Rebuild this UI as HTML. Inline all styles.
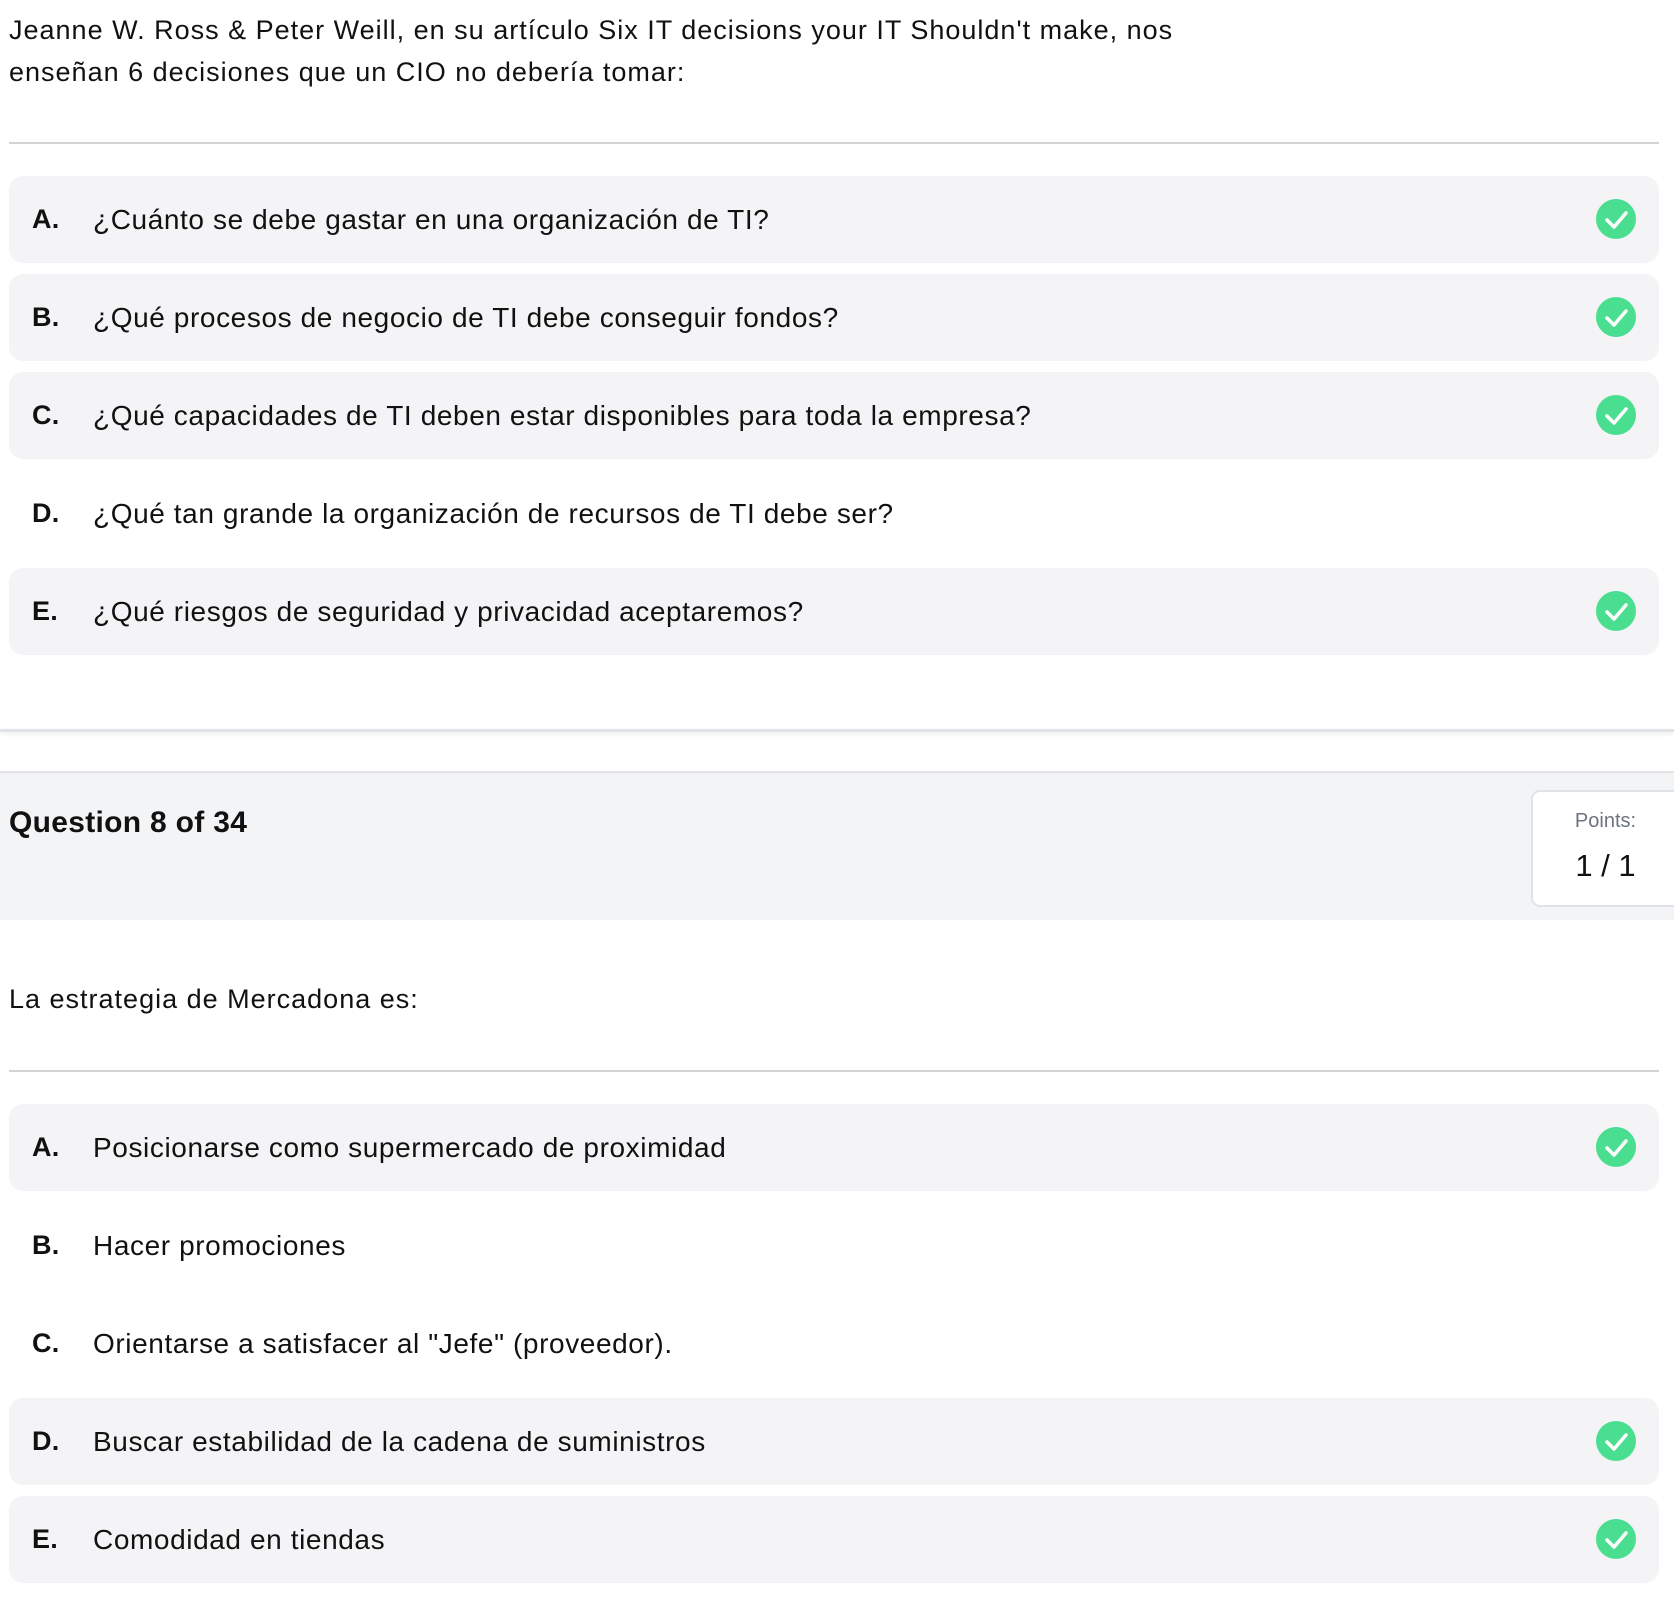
<!DOCTYPE html>
<html><head><meta charset="utf-8"><style>
body{margin:0;width:1674px;height:1600px;background:#fff;font-family:"Liberation Sans",sans-serif;color:#111;position:relative;overflow:hidden}
.p{position:absolute;left:9px;font-size:27px;line-height:42px;letter-spacing:1px}
.hr{position:absolute;left:9px;width:1650px;height:2px;background:#d4d4d8}
.opt{position:absolute;left:9px;width:1650px;height:87px;border-radius:14px}
.opt.bg{background:#f4f4f6}
.opt .l{position:absolute;left:23px;top:0;line-height:87px;font-size:27px;font-weight:bold;letter-spacing:0.3px}
.opt .t{position:absolute;left:84px;top:0;line-height:87px;font-size:28px;letter-spacing:0.6px}
.opt svg{position:absolute;left:1587px;top:23px}
</style></head><body>
<div class="p" style="top:9px">Jeanne W. Ross &amp; Peter Weill, en su artículo Six IT decisions your IT Shouldn't make, nos<br>enseñan 6 decisiones que un CIO no debería tomar:</div>
<div class="hr" style="top:142px"></div>

<div class="opt bg" style="top:176px"><span class="l">A.</span><span class="t">¿Cuánto se debe gastar en una organización de TI?</span><svg width="40" height="40"><circle cx="20" cy="20" r="20" fill="#4ade91"/><path d="M11 21l7 7 12-14" stroke="#fff" stroke-width="3.5" fill="none" stroke-linecap="round" stroke-linejoin="round"/></svg></div>
<div class="opt bg" style="top:274px"><span class="l">B.</span><span class="t">¿Qué procesos de negocio de TI debe conseguir fondos?</span><svg width="40" height="40"><circle cx="20" cy="20" r="20" fill="#4ade91"/><path d="M11 21l7 7 12-14" stroke="#fff" stroke-width="3.5" fill="none" stroke-linecap="round" stroke-linejoin="round"/></svg></div>
<div class="opt bg" style="top:372px"><span class="l">C.</span><span class="t">¿Qué capacidades de TI deben estar disponibles para toda la empresa?</span><svg width="40" height="40"><circle cx="20" cy="20" r="20" fill="#4ade91"/><path d="M11 21l7 7 12-14" stroke="#fff" stroke-width="3.5" fill="none" stroke-linecap="round" stroke-linejoin="round"/></svg></div>
<div class="opt" style="top:470px"><span class="l">D.</span><span class="t">¿Qué tan grande la organización de recursos de TI debe ser?</span></div>
<div class="opt bg" style="top:568px"><span class="l">E.</span><span class="t">¿Qué riesgos de seguridad y privacidad aceptaremos?</span><svg width="40" height="40"><circle cx="20" cy="20" r="20" fill="#4ade91"/><path d="M11 21l7 7 12-14" stroke="#fff" stroke-width="3.5" fill="none" stroke-linecap="round" stroke-linejoin="round"/></svg></div>

<div style="position:absolute;left:0;top:729px;width:1674px;height:3px;background:#dfe2e6;box-shadow:0 2px 4px rgba(0,0,0,0.08)"></div>
<div style="position:absolute;left:0;top:771px;width:1674px;height:147px;background:#f3f4f6;border-top:2px solid #e2e4e8"></div>
<div style="position:absolute;left:9px;top:806px;font-size:30px;font-weight:bold;letter-spacing:0.3px">Question 8 of 34</div>
<div style="position:absolute;left:1531px;top:790px;width:160px;height:113px;background:#fff;border:2px solid #dfe2e6;border-radius:9px">
<div style="position:absolute;left:0;width:145px;top:18px;text-align:center;font-size:20px;color:#6b7280">Points:</div>
<div style="position:absolute;left:0;width:145px;top:56px;text-align:center;font-size:31px;font-weight:500">1 / 1</div></div>

<div class="p" style="top:978px">La estrategia de Mercadona es:</div>
<div class="hr" style="top:1070px"></div>

<div class="opt bg" style="top:1104px"><span class="l">A.</span><span class="t">Posicionarse como supermercado de proximidad</span><svg width="40" height="40"><circle cx="20" cy="20" r="20" fill="#4ade91"/><path d="M11 21l7 7 12-14" stroke="#fff" stroke-width="3.5" fill="none" stroke-linecap="round" stroke-linejoin="round"/></svg></div>
<div class="opt" style="top:1202px"><span class="l">B.</span><span class="t">Hacer promociones</span></div>
<div class="opt" style="top:1300px"><span class="l">C.</span><span class="t">Orientarse a satisfacer al "Jefe" (proveedor).</span></div>
<div class="opt bg" style="top:1398px"><span class="l">D.</span><span class="t">Buscar estabilidad de la cadena de suministros</span><svg width="40" height="40"><circle cx="20" cy="20" r="20" fill="#4ade91"/><path d="M11 21l7 7 12-14" stroke="#fff" stroke-width="3.5" fill="none" stroke-linecap="round" stroke-linejoin="round"/></svg></div>
<div class="opt bg" style="top:1496px"><span class="l">E.</span><span class="t">Comodidad en tiendas</span><svg width="40" height="40"><circle cx="20" cy="20" r="20" fill="#4ade91"/><path d="M11 21l7 7 12-14" stroke="#fff" stroke-width="3.5" fill="none" stroke-linecap="round" stroke-linejoin="round"/></svg></div>
</body></html>
